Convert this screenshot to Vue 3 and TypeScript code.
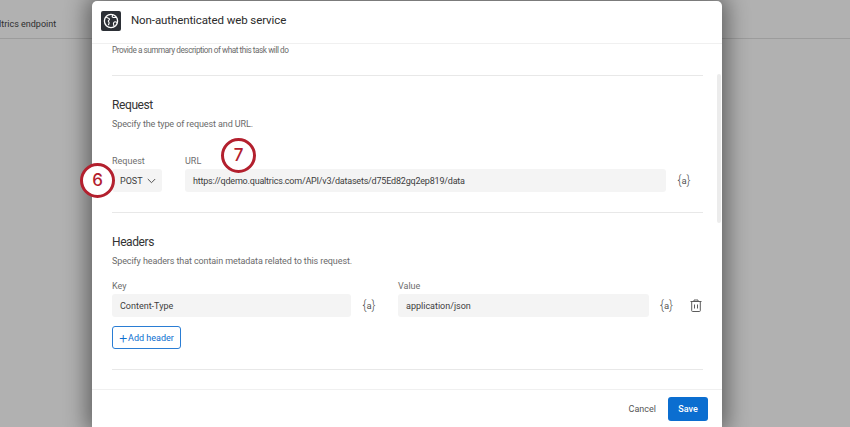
<script setup lang="ts">
interface Header { key: string; value: string }
const headers: Header[] = [{ key: 'Content-Type', value: 'application/json' }]
</script>

<template>
  <div class="page">
    <div class="topbar"><span class="crumb">Qualtrics endpoint</span></div>
    <div class="modal">
      <header class="m-head">
        <span class="logo">
          <svg width="20" height="20" viewBox="0 0 20 20" fill="none" stroke="#fff" stroke-width="1.3">
            <circle cx="10" cy="10" r="6.6" />
            <path d="M5.2 6.2c1.3.6 2.6.7 3.2 1.6.5.8-.5 1.4-1 2-.5.7.6 1.2.7 2 .1.8-.4 1.7-.8 2.3M11.8 3.8c-.8 1-.9 1.900.1 2.500 1 .5 2.100-.1 3.600.2M16 11.500c-1-.7-2.300-1-3.100-.2-.7.7-.5 1.700-.2 2.500.2.600.4 1.200.3 1.700" stroke-width="1.100" />
          </svg>
        </span>
        <h1>Non-authenticated web service</h1>
      </header>

      <div class="m-body">
        <div class="content">
          <p class="hint first">Provide a summary description of what this task will do</p>
          <hr class="rule r1" />

          <h2>Request</h2>
          <p class="hint">Specify the type of request and URL.</p>
          <div class="req-row">
            <div class="field select-field">
              <label>Request</label>
              <div class="select">
                <span>POST</span>
                <svg width="9" height="6" viewBox="0 0 9 6" fill="none" stroke="#525252" stroke-width="1"><path d="M.8 1l3.700 3.700L8.200 1" /></svg>
              </div>
            </div>
            <div class="field url-field">
              <label>URL</label>
              <div class="input url">https://qdemo.qualtrics.com/API/v3/datasets/d75Ed82gq2ep819/data</div>
            </div>
            <span class="piped url-piped"><i>{</i>a<i>}</i></span>
          </div>
          <hr class="rule r2" />

          <h2>Headers</h2>
          <p class="hint">Specify headers that contain metadata related to this request.</p>
          <div v-for="h in headers" :key="h.key" class="hdr-row">
            <div class="field key-field">
              <label>Key</label>
              <div class="input">{{ h.key }}</div>
            </div>
            <span class="piped key-piped"><i>{</i>a<i>}</i></span>
            <div class="field value-field">
              <label>Value</label>
              <div class="input">{{ h.value }}</div>
            </div>
            <span class="piped value-piped"><i>{</i>a<i>}</i></span>
            <svg class="trash" width="12" height="13" viewBox="0 0 12 13" fill="none" stroke="#5c5c5c" stroke-width="1">
              <path d="M.5 2.500h11M4 2.500V1h4v1.500M1.700 2.500v9.200c0 .5.300.8.800.8h7c.5 0 .8-.3.800-.8V2.500M4.500 5.500v4M7.500 5.500v4" />
            </svg>
          </div>
          <button class="add" type="button"><span class="plus">+</span>Add header</button>
          <hr class="rule r3" />
        </div>
        <div class="scrollbar"></div>
      </div>

      <footer class="m-foot">
        <button class="cancel" type="button">Cancel</button>
        <button class="save" type="button">Save</button>
      </footer>
    </div>

    <span class="callout c6">6</span>
    <span class="callout c7">7</span>
  </div>
</template>

<style>
html, body { margin: 0; height: 427px; overflow: hidden; }
</style>

<style scoped>
.page {
  position: relative;
  width: 850px;
  height: 427px;
  overflow: hidden;
  background: #b1b1b1;
  font-family: Roboto, "Noto Sans", sans-serif;
  color: #3b3b3b;
}
.topbar {
  border-bottom: 1px solid #9c9c9c;
  display: flex;
  align-items: center;
  overflow: hidden;
  padding-top: 10px;
  height: 28px;
}
.crumb {
  font-size: 9px;
  margin-left: -17px;
  white-space: nowrap;
  color: #2f2f2f;
}
.modal {
  position: absolute;
  left: 92px;
  top: 1px;
  width: 630px;
  height: 426px;
  background: #fff;
  border-radius: 5px 5px 0 0;
  box-shadow: 0 0 22px 5px rgba(0, 0, 0, .46);
  display: flex;
  flex-direction: column;
}
.m-head {
  flex: none;
  display: flex;
  align-items: center;
  gap: 10px;
  padding: 0 9px 4px;
  border-bottom: 1px solid #f0f0f0;
  height: 38px;
}
.logo {
  width: 20px;
  height: 20px;
  border-radius: 2px;
  background: #2c3036;
  display: flex;
  margin-top: 1px;
}
h1 {
  margin: 0;
  font-size: 11.500px;
  letter-spacing: -.1px;
  font-weight: 400;
  color: #2b2b2b;
}
.m-body {
  flex: 1;
  min-height: 0;
  position: relative;
  overflow: hidden;
}
.content { padding: 0 19px 0 20px; }
.hint {
  margin: 0;
  font-size: 9px;
  letter-spacing: -.1px;
  line-height: 12px;
  color: #6b6b6b;
}
.first { font-size: 8.200px; letter-spacing: -.44px; }
.rule {
  border: 0;
  height: 1px;
  background: #e8e8e8;
  margin: 0;
}
.r1 { margin-top: 19px; }
.r2 { margin-top: 20px; }
.r3 { margin-top: 20px; }
h2 {
  margin: 21px 0 0;
  font-size: 12px;
  letter-spacing: -.4px;
  line-height: 16px;
  font-weight: 400;
  color: #333;
}
h2 + .hint { margin-top: 5px; }
.field label {
  display: block;
  font-size: 9px;
  line-height: 12px;
  color: #6e6e6e;
  margin-bottom: 2px;
}
.input, .select {
  height: 23px;
  box-sizing: border-box;
  background: #f4f4f4;
  border-radius: 3px;
  font-size: 9px;
  line-height: 25px;
  padding-left: 8px;
  color: #3d3d3d;
  white-space: nowrap;
}
.url { letter-spacing: -.2px; }
.req-row {
  display: flex;
  align-items: flex-end;
  margin-top: 25px;
}
.select-field { width: 50px; margin-right: 23px; }
.select {
  display: flex;
  align-items: center;
  justify-content: space-between;
  padding: 1px 6px 0 8px;
  line-height: 12px;
}
.url-field { width: 481px; }
.piped {
  font-size: 9.500px;
  line-height: 23px;
  height: 23px;
  color: #555;
  text-align: center;
  flex: none;
}
.piped i {
  font-style: normal;
  font-size: 12px;
  font-weight: 300;
}
.url-piped { width: 36px; }
.hdr-row {
  display: flex;
  align-items: flex-end;
  margin-top: 13px;
}
.key-field { width: 239px; }
.key-piped { width: 36px; }
.value-field { width: 251px; margin-left: 11px; }
.value-piped { width: 35px; }
.trash { margin: 0 0 5px 6px; flex: none; }
.add {
  display: flex;
  align-items: center;
  justify-content: center;
  margin-top: 9px;
  width: 69px;
  height: 23px;
  padding: 0;
  border: 1px solid #2a7dd4;
  border-radius: 3px;
  background: #fff;
  color: #0b6ed0;
  font-family: inherit;
  font-size: 9px;
}
.plus { font-size: 14px; line-height: 1; margin-right: 1px; font-weight: 300; }
.scrollbar {
  position: absolute;
  left: 625px;
  top: 30px;
  width: 4px;
  height: 149px;
  background: #ececec;
  border-radius: 2px;
}
.m-foot {
  flex: none;
  height: 37px;
  border-top: 1px solid #f0f0f0;
  display: flex;
  align-items: center;
  justify-content: flex-end;
  gap: 12px;
  padding: 0 14px 0 0;
}
.cancel, .save {
  font-family: inherit;
  font-size: 9px;
  padding: 0;
  border: 0;
}
.cancel { background: none; color: #555; }
.save {
  width: 40px;
  height: 24px;
  border-radius: 3px;
  background: #0b6ed0;
  color: #fff;
  font-weight: 500;
}
.callout {
  position: absolute;
  width: 35px;
  height: 35px;
  box-sizing: border-box;
  border: 3px solid #b3202e;
  border-radius: 50%;
  background: #fff;
  color: #b3202e;
  font-family: Inter, sans-serif;
  font-size: 17px;
  font-weight: 500;
  line-height: 29px;
  text-align: center;
}
.c6 { left: 80px; top: 163px; }
.c7 { left: 221px; top: 138px; }
</style>
